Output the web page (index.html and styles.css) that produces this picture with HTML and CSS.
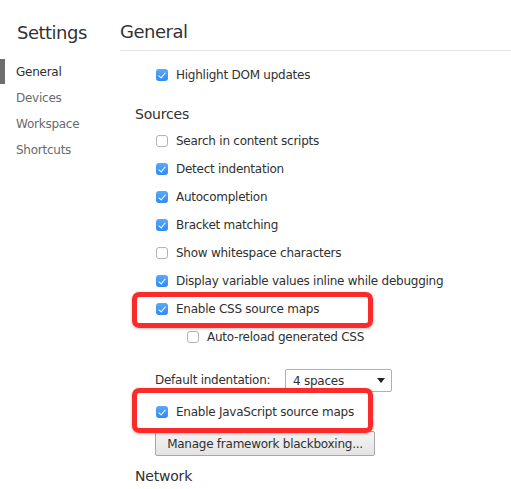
FILE: index.html
```html
<!DOCTYPE html>
<html>
<head>
<meta charset="utf-8">
<link rel="stylesheet" href="styles.css">
</head>
<body>
<div class="page">
  <aside class="sidebar">
    <h1 class="side-title">Settings</h1>
    <nav class="side-nav">
      <div class="side-item active">General</div>
      <div class="side-item">Devices</div>
      <div class="side-item">Workspace</div>
      <div class="side-item">Shortcuts</div>
    </nav>
  </aside>
  <main class="main">
    <h2 class="main-title">General</h2>
    <div class="content">
      <div class="row first"><span class="cb on"></span><span>Highlight DOM updates</span></div>
      <h3 class="section">Sources</h3>
      <div class="row"><span class="cb"></span><span>Search in content scripts</span></div>
      <div class="row"><span class="cb on"></span><span>Detect indentation</span></div>
      <div class="row"><span class="cb on"></span><span>Autocompletion</span></div>
      <div class="row"><span class="cb on"></span><span>Bracket matching</span></div>
      <div class="row"><span class="cb"></span><span>Show whitespace characters</span></div>
      <div class="row"><span class="cb on"></span><span>Display variable values inline while debugging</span></div>
      <div class="row"><span class="cb on"></span><span>Enable CSS source maps</span></div>
      <div class="row sub"><span class="cb"></span><span>Auto-reload generated CSS</span></div>
      <div class="select-row"><span class="select-label">Default indentation:</span><span class="select"><span>4 spaces</span><span class="caret"></span></span></div>
      <div class="row js"><span class="cb on"></span><span>Enable JavaScript source maps</span></div>
      <div class="btn">Manage framework blackboxing...</div>
      <h3 class="section net">Network</h3>
    </div>
  </main>
  <div class="mark mark-css"></div>
  <div class="mark mark-js"></div>
</div>
</body>
</html>
```
FILE: styles.css
```css
html, body {
  margin: 0;
  padding: 0;
  background: #fff;
}
body {
  font-family: "DejaVu Sans", "Liberation Sans", sans-serif;
  color: #303030;
  font-size: 12px;
  letter-spacing: -0.25px;
}
.page {
  position: relative;
  display: flex;
  width: 511px;
  height: 489px;
  overflow: hidden;
}
.sidebar {
  width: 120px;
  flex: none;
}
.side-title {
  margin: 0;
  padding: 21px 0 0 17px;
  font-size: 18px;
  letter-spacing: -0.5px;
  line-height: 24px;
  font-weight: normal;
  color: #333;
}
.side-nav {
  margin-top: 14px;
}
.side-item {
  position: relative;
  height: 26px;
  line-height: 26px;
  padding-left: 16px;
  font-size: 12px;
  color: #6a6a6a;
}
.side-item.active {
  color: #303030;
}
.side-item.active::before {
  content: "";
  position: absolute;
  left: 0;
  top: 0;
  width: 5px;
  height: 25px;
  background: #6e6e6e;
}
.main {
  flex: 1;
}
.main-title {
  margin: 0;
  height: 51px;
  box-sizing: border-box;
  padding-top: 20px;
  font-size: 18px;
  letter-spacing: -0.5px;
  line-height: 24px;
  font-weight: normal;
  color: #333;
  border-bottom: 1px solid #e3e3e3;
}
.content {
  padding-left: 15px;
  display: flex;
  flex-direction: column;
  align-items: flex-start;
}
.row {
  height: 28px;
  display: flex;
  align-items: center;
  gap: 8px;
  padding-left: 21px;
}
.row.first {
  margin-top: 10px;
}
.row.sub {
  padding-left: 52px;
}
.row.js {
  margin-top: 6px;
}
.section {
  margin: 14px 0 2px 0;
  font-size: 14px;
  letter-spacing: -0.2px;
  line-height: 22px;
  font-weight: normal;
  color: #303030;
}
.section.net {
  margin-top: 9px;
}
.cb {
  width: 12px;
  height: 12px;
  box-sizing: border-box;
  border-radius: 3px;
  border: 1px solid #b4b4b4;
  background: #fff;
  flex: none;
  position: relative;
}
.cb.on {
  border: none;
  background: linear-gradient(#5aa9fb, #2f8af7);
}
.cb.on::after {
  content: "";
  position: absolute;
  left: 4px;
  top: 1.5px;
  width: 3px;
  height: 6px;
  border: solid #fff;
  border-width: 0 1.6px 1.6px 0;
  transform: rotate(40deg);
}
.select-row {
  margin-top: 17px;
  height: 24px;
  display: flex;
  align-items: center;
  padding-left: 20px;
}
.select-label {
  width: 130px;
}
.select {
  width: 107px;
  height: 23px;
  box-sizing: border-box;
  border: 1px solid #b0b0b0;
  border-radius: 2px;
  background: #fff;
  display: flex;
  align-items: center;
  justify-content: space-between;
  padding: 0 6px 0 7px;
  margin-top: 1px;
}
.caret {
  width: 0;
  height: 0;
  border-left: 4.5px solid transparent;
  border-right: 4.5px solid transparent;
  border-top: 5px solid #222;
}
.btn {
  margin: 5px 0 0 20px;
  width: 220px;
  height: 25px;
  box-sizing: border-box;
  border: 1px solid #a8a8a8;
  border-radius: 2px;
  background: linear-gradient(#f6f6f6, #e2e2e2);
  display: flex;
  align-items: center;
  justify-content: center;
  color: #303030;
}
.mark {
  position: absolute;
  box-sizing: border-box;
  border: 5px solid #fb2b2b;
  border-radius: 7px;
  box-shadow: 0 1px 3px rgba(0,0,0,0.25);
}
.mark-css {
  left: 132px;
  top: 292px;
  width: 241px;
  height: 36px;
}
.mark-js {
  left: 132px;
  top: 388px;
  width: 241px;
  height: 45px;
}
```
